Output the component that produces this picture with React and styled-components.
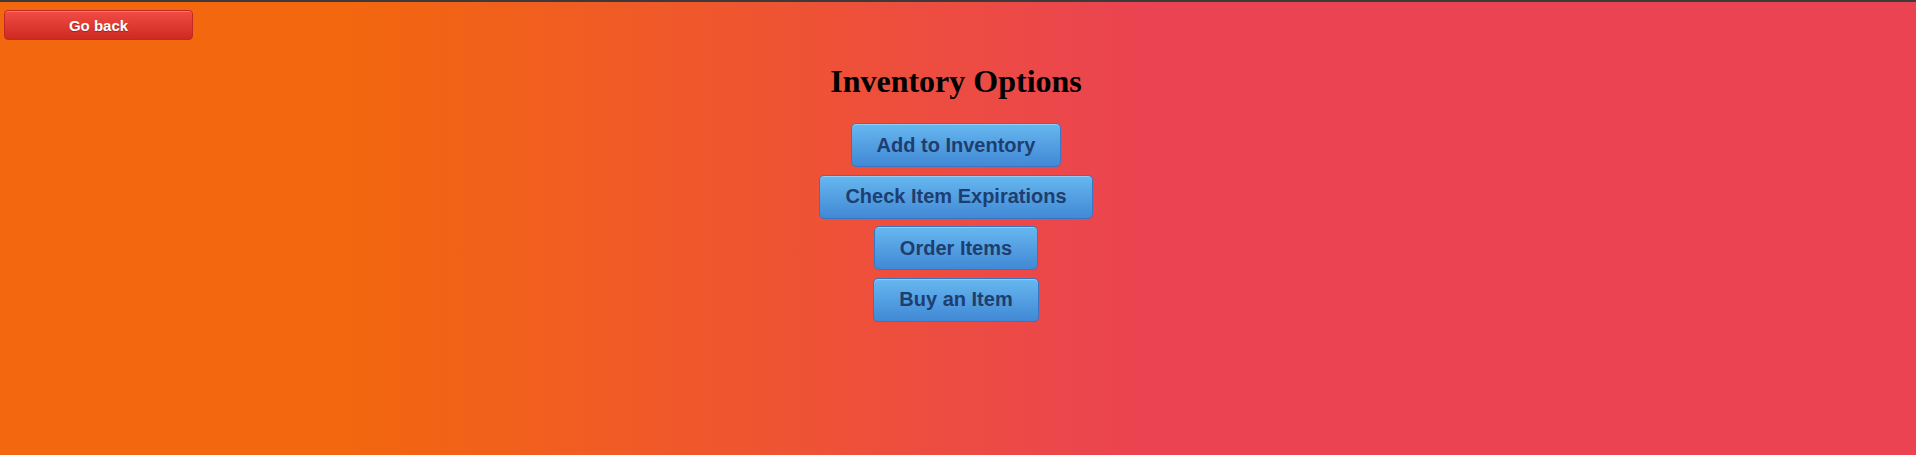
import React from 'react'
import styled, { createGlobalStyle } from 'styled-components'

const GlobalStyle = createGlobalStyle`
html, body {
  margin: 0;
  padding: 0;
  height: 100%;
}
#root {
  min-height: 100%;
}
`

const Page = styled.div`
min-height: 100vh;
box-sizing: border-box;
border-top: 2px solid #3d3a39;
background: linear-gradient(to right, #f3670e 18%, #eb4352 60%);
font-family: "Liberation Serif", "Times New Roman", serif;
padding: 8px 8px 0 4px;
`

const BackButton = styled.button`
display: block;
width: 189px;
height: 30px;
margin: 0;
padding: 0;
border: 1px solid #bf2a22;
border-radius: 4px;
background: linear-gradient(to bottom, #f24b43 0%, #e03b33 50%, #cf2a22 100%);
box-shadow: inset 0 1px 0 rgba(255, 255, 255, 0.25);
color: #fff;
font-family: "Liberation Sans", Arial, sans-serif;
font-weight: bold;
font-size: 15px;
text-shadow: 0 1px 1px rgba(0, 0, 0, 0.3);
cursor: pointer;
`

const Main = styled.div`
display: flex;
flex-direction: column;
align-items: center;
`

const Title = styled.h1`
font-size: 32px;
font-weight: bold;
color: #000;
margin: 23px 0 23px 0;
`

const Options = styled.div`
display: flex;
flex-direction: column;
align-items: center;
gap: 7.5px;
`

const OptionButton = styled.button`
height: 44px;
box-sizing: border-box;
padding: 0 25px;
border: 1px solid #3b74c2;
border-radius: 5px;
background: linear-gradient(to bottom, #66b8f0 0%, #549fe2 50%, #4189d5 100%);
box-shadow: inset 0 1px 0 rgba(255, 255, 255, 0.3);
color: #1d3e6f;
font-family: "Liberation Sans", Arial, sans-serif;
font-weight: bold;
font-size: 20px;
cursor: pointer;
`

const options = ['Add to Inventory', 'Check Item Expirations', 'Order Items', 'Buy an Item']

const App = () => {
    return (
        <Page>
            <GlobalStyle />
            <BackButton>Go back</BackButton>
            <Main>
                <Title>Inventory Options</Title>
                <Options>
                    {options.map((o) => (
                        <OptionButton key={o}>{o}</OptionButton>
                    ))}
                </Options>
            </Main>
        </Page>
    )
}

export default App
